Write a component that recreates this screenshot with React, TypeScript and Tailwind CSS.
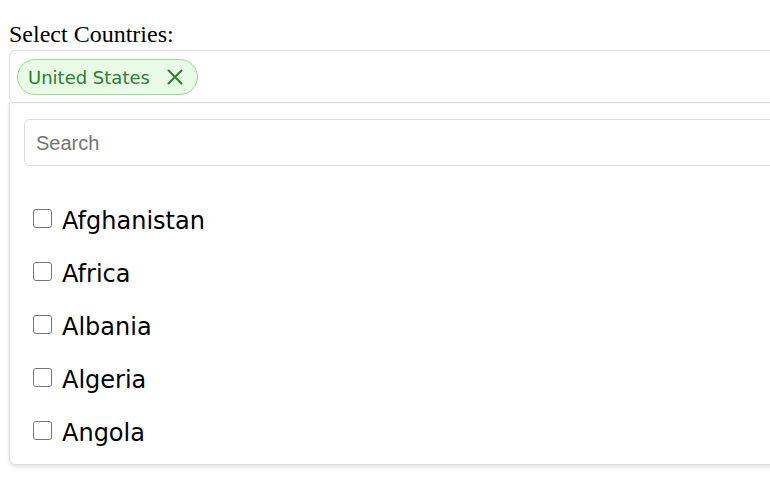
import React from "react";

const countries = ["Afghanistan", "Africa", "Albania", "Algeria", "Angola"];

export default function App() {
  return (
    <div className="w-[770px] h-[489px] overflow-hidden bg-white pl-[9px] pt-[21px]">
      <div
        className="text-[24px] leading-[27px] h-[27px] text-black"
        style={{ fontFamily: '"Liberation Serif", serif' }}
      >
        Select Countries:
      </div>
      <div className="w-[820px] mt-[2px]">
        <div className="h-[53px] border border-[#dcdcdc] rounded-[6px] flex items-center pl-[7px] shadow-[0_0_2px_rgba(0,0,0,0.06)]">
          <div
            className="h-[36px] flex items-center rounded-full border border-[#96e08f] bg-[#e7fbe5] pl-[10px] pr-[14px] text-[#2e7d32] text-[18px]"
            style={{ fontFamily: '"DejaVu Sans", Verdana, sans-serif' }}
          >
            <span className="leading-none pt-[2px]">United States</span>
            <svg className="ml-[17px]" width="16" height="16" viewBox="0 0 16 16">
              <path d="M1.5 1.5 L14.5 14.5 M14.5 1.5 L1.5 14.5" stroke="#2e7d32" strokeWidth="2" strokeLinecap="round" />
            </svg>
          </div>
        </div>
        <div className="border border-t-0 border-[#dedede] rounded-b-[6px] shadow-[0_2px_4px_rgba(0,0,0,0.12)] pl-[14px] pt-[16px] pb-[7px]">
          <div
            className="h-[47px] border border-[#dcdcdc] rounded-[6px] flex items-center pl-[11px] text-[20px] text-[#757575]"
            style={{ fontFamily: '"Liberation Sans", Arial, sans-serif' }}
          >
            Search
          </div>
          <div className="mt-[26px] flex flex-col">
            {countries.map((c) => (
              <div key={c} className="h-[53px] flex items-center pl-[9px]">
                <div className="w-[19px] h-[19px] rounded-[3px] border-[1.5px] border-[#767676] bg-white" />
                <span
                  className="ml-[10px] text-[24px] leading-none text-black pt-[4px]"
                  style={{ fontFamily: '"DejaVu Sans", Verdana, sans-serif' }}
                >
                  {c}
                </span>
              </div>
            ))}
          </div>
        </div>
      </div>
    </div>
  );
}
